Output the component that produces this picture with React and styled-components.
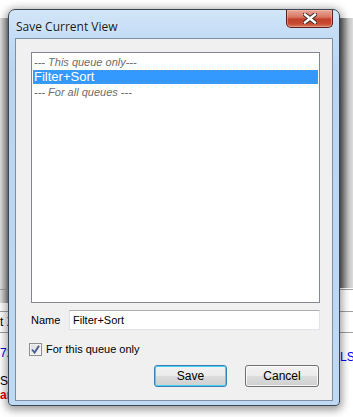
import React from "react";
import styled, { createGlobalStyle } from "styled-components";

const GlobalStyle = createGlobalStyle`
  html, body {
    margin: 0;
    padding: 0;
    background: #ffffff;
  }
  body {
    font-family: "Liberation Sans", Arial, sans-serif;
    font-size: 11px;
  }
`;

const items = [
  { label: "--- This queue only---", kind: "header" },
  { label: "Filter+Sort", kind: "selected" },
  { label: "--- For all queues ---", kind: "header" },
];

const CloseGlyph = () => (
  <svg width="14" height="11" viewBox="0 0 14 11">
    <path
      d="M2 1.5 L12 9.5 M12 1.5 L2 9.5"
      stroke="#3d2b28"
      strokeWidth="4.4"
      strokeLinecap="square"
    />
    <path
      d="M2 1.5 L12 9.5 M12 1.5 L2 9.5"
      stroke="#ffffff"
      strokeWidth="2.4"
      strokeLinecap="square"
    />
  </svg>
);

const CheckGlyph = () => (
  <svg width="9" height="9" viewBox="0 0 9 9">
    <path
      d="M1 4.5 L3.6 7.6 L8 0.8"
      fill="none"
      stroke="#4b5f92"
      strokeWidth="1.9"
    />
  </svg>
);

const App = () => {
  return (
    <>
      <GlobalStyle />
      <Desktop>
        <ShadowStrip side="left" />
        <ShadowStrip side="right" />
        <BackLine top={289} />
        <BackLine top={311} />
        <BackLine top={332} />
        <BackFragment top={316} left={0} color="#000">t X</BackFragment>
        <BackFragment top={347} left={0} color="#0000ee">72</BackFragment>
        <BackFragment top={375} left={0} color="#000">Se</BackFragment>
        <BackFragment top={389} left={0} color="#e00000" bold>
          ar
        </BackFragment>
        <BackFragment top={351} left={340} color="#0000ee">LS</BackFragment>

        <Window>
          <TitleBar>
            <Title>Save Current View</Title>
            <CloseButton>
              <CloseGlyph />
            </CloseButton>
          </TitleBar>
          <Client>
            <ListBox>
              {items.map((item) => (
                <ListItem key={item.label} kind={item.kind}>
                  {item.label}
                </ListItem>
              ))}
            </ListBox>
            <NameRow>
              <Label>Name</Label>
              <TextBox>Filter+Sort</TextBox>
            </NameRow>
            <CheckRow>
              <CheckBox>
                <CheckGlyph />
              </CheckBox>
              <Label>For this queue only</Label>
            </CheckRow>
            <ButtonRow>
              <Button primary>Save</Button>
              <Button>Cancel</Button>
            </ButtonRow>
          </Client>
        </Window>
      </Desktop>
    </>
  );
};

export default App;

// Styled Components

const Desktop = styled.div`
  position: relative;
  width: 353px;
  height: 417px;
  overflow: hidden;
  padding: 9px 0 0 8px;
  box-sizing: border-box;
  background: #ffffff;
`;

const ShadowStrip = styled.div`
  position: absolute;
  top: 18px;
  height: ${(p) => (p.side === "left" ? 285 : 270)}px;
  width: ${(p) => (p.side === "left" ? 9 : 15)}px;
  ${(p) => (p.side === "left" ? "left: 0;" : "right: 0;")}
  background: ${(p) =>
    p.side === "left"
      ? "linear-gradient(90deg, #e2e2e2 0%, #b4b4b4 60%, #7a7a7a 100%)"
      : "linear-gradient(90deg, #4a4a4a 0%, #8a8a8a 35%, #c4c4c4 70%, #dcdcdc 100%)"};
`;

const BackLine = styled.div`
  position: absolute;
  left: 0;
  right: 0;
  top: ${(p) => p.top}px;
  height: 1px;
  background: #a0a0a0;
`;

const BackFragment = styled.div`
  position: absolute;
  top: ${(p) => p.top}px;
  left: ${(p) => p.left}px;
  color: ${(p) => p.color};
  font-family: "Liberation Sans", Arial, sans-serif;
  font-size: 12px;
  line-height: 12px;
  font-weight: ${(p) => (p.bold ? 700 : 400)};
  white-space: nowrap;
`;

const Window = styled.div`
  position: relative;
  z-index: 1;
  width: 332px;
  height: 397px;
  box-sizing: border-box;
  border: 1px solid #3a4654;
  border-radius: 7px 7px 4px 4px;
  background: linear-gradient(
    180deg,
    #d4e6f8 0px,
    #c6def6 20px,
    #b9d5f2 60px,
    #c0d9f3 100%
  );
  box-shadow: 0 2px 8px 2px rgba(0, 0, 0, 0.4);
  display: flex;
  flex-direction: column;
  padding: 0 6px 4px 6px;
`;

const TitleBar = styled.div`
  height: 28px;
  display: flex;
  align-items: flex-start;
  justify-content: space-between;
  flex-shrink: 0;
`;

const Title = styled.div`
  font-family: "Open Sans", "Noto Sans", sans-serif;
  font-size: 12px;
  color: #1a1a1a;
  margin-top: 8px;
  padding-left: 1px;
  text-shadow: 0 0 6px rgba(255, 255, 255, 0.9);
`;

const CloseButton = styled.div`
  width: 47px;
  height: 18px;
  box-sizing: border-box;
  border: 1px solid #5b2018;
  border-top: none;
  border-radius: 0 0 5px 5px;
  background: linear-gradient(
    180deg,
    #e8a797 0%,
    #d97a66 40%,
    #c2412b 55%,
    #c84a32 80%,
    #d77a5e 100%
  );
  box-shadow: inset 0 0 0 1px rgba(255, 200, 190, 0.45);
  display: flex;
  align-items: center;
  justify-content: center;
`;

const Client = styled.div`
  flex: 1;
  box-sizing: border-box;
  border: 1px solid #7d8fa3;
  background: #f0f0f0;
  display: flex;
  flex-direction: column;
  padding: 13px 12px 0 15px;
`;

const ListBox = styled.div`
  height: 251px;
  box-sizing: border-box;
  border: 1px solid #828790;
  background: #ffffff;
  padding: 2px 1px 0 1px;
`;

const ListItem = styled.div`
  height: ${(p) => (p.kind === "selected" ? 14 : 15)}px;
  line-height: ${(p) => (p.kind === "selected" ? 14 : 15)}px;
  margin-bottom: ${(p) => (p.kind === "selected" ? 1 : 0)}px;
  padding-left: 1px;
  font-size: ${(p) => (p.kind === "header" ? 11 : 13)}px;
  white-space: nowrap;
  font-style: ${(p) => (p.kind === "header" ? "italic" : "normal")};
  color: ${(p) => (p.kind === "header" ? "#6d6d6d" : p.kind === "selected" ? "#ffffff" : "#000")};
  background: ${(p) => (p.kind === "selected" ? "#3399ff" : "transparent")};
  outline: ${(p) => (p.kind === "selected" ? "1px dotted #cc7a33" : "none")};
  outline-offset: -1px;
`;

const NameRow = styled.div`
  display: flex;
  align-items: center;
  margin-top: 7px;
  height: 20px;
`;

const Label = styled.span`
  font-size: 11px;
  color: #000;
  white-space: nowrap;
`;

const TextBox = styled.div`
  margin-left: auto;
  width: 251px;
  height: 20px;
  box-sizing: border-box;
  border: 1px solid #e2e3ea;
  border-top-color: #abadb3;
  background: #fff;
  padding: 0 3px;
  line-height: 18px;
  font-size: 11px;
`;

const CheckRow = styled.div`
  display: flex;
  align-items: center;
  gap: 4px;
  margin-top: 12px;
  margin-left: -2px;
  height: 14px;
`;

const CheckBox = styled.div`
  width: 13px;
  height: 13px;
  box-sizing: border-box;
  border: 1px solid #8e8f8f;
  background: linear-gradient(135deg, #dcdcdc 0%, #f6f6f6 100%);
  box-shadow: inset 0 0 0 1px #f4f4f4;
  display: flex;
  align-items: center;
  justify-content: center;
`;

const ButtonRow = styled.div`
  display: flex;
  justify-content: flex-end;
  gap: 18px;
  margin-top: 9px;
  padding-right: 1px;
`;

const Button = styled.div`
  width: ${(p) => (p.primary ? 73 : 74)}px;
  height: 22px;
  box-sizing: border-box;
  border: 1px solid ${(p) => (p.primary ? "#3c7fb1" : "#707070")};
  border-radius: 3px;
  background: linear-gradient(
    180deg,
    #f2f2f2 0%,
    #ebebeb 50%,
    #dddddd 50%,
    #cfcfcf 100%
  );
  box-shadow: inset 0 0 0 1px
    ${(p) => (p.primary ? "#48d1f6" : "rgba(255, 255, 255, 0.8)")};
  display: flex;
  align-items: center;
  justify-content: center;
  font-size: 12px;
  color: #000;
`;
